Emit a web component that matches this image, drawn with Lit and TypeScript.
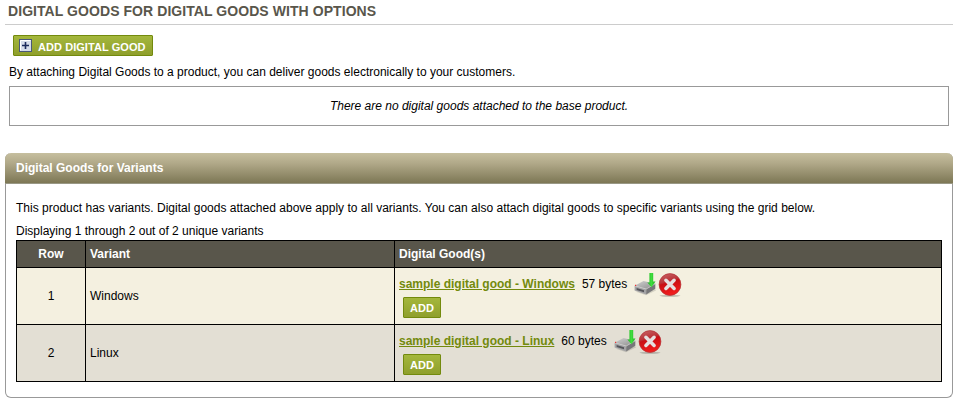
import { LitElement, html, css } from "lit";
import { customElement } from "lit/decorators.js";

interface VariantRow {
  row: number;
  variant: string;
  good: string;
  size: string;
}

const ROWS: VariantRow[] = [
  { row: 1, variant: "Windows", good: "sample digital good - Windows", size: "57 bytes" },
  { row: 2, variant: "Linux", good: "sample digital good - Linux", size: "60 bytes" },
];

@customElement("download-icon")
class DownloadIcon extends LitElement {
  static styles = css`
    :host { display: block; width: 24px; height: 24px; }
    svg { display: block; }
  `;
  render() {
    return html`<svg width="24" height="24" viewBox="0 0 24 24">
      <defs>
        <linearGradient id="top" x1="0" y1="0" x2="1" y2="1">
          <stop offset="0" stop-color="#d2d2d2" /><stop offset="1" stop-color="#8b8b8b" />
        </linearGradient>
        <linearGradient id="arrow" x1="0" y1="0" x2="1" y2="0">
          <stop offset="0" stop-color="#1fb51f" /><stop offset=".5" stop-color="#3fdc3f" /><stop offset="1" stop-color="#1fb51f" />
        </linearGradient>
      </defs>
      <path d="M2 19.5L13 23.3L23 18.5L22 17L12 20Z" fill="#000" opacity=".13" />
      <path d="M1.6 13.8L10.5 9L22.3 11.8L13.2 17Z" fill="url(#top)" />
      <path d="M1.6 13.8L13.2 17V22.4L1.6 18.5Z" fill="#a3a3a5" />
      <path d="M13.2 17L22.3 11.8V16.8L13.2 22.4Z" fill="#77777a" />
      <path d="M3.6 16L11 18.2V20.2L3.6 17.9Z" fill="#55555a" />
      <path d="M1.6 13.8L13.2 17L22.3 11.8" fill="none" stroke="#d6d6d6" stroke-width=".6" />
      <path d="M2 12.8h1.2v1.1H2z" fill="#e33" />
      <path d="M16.4 1H20.2V9.5H22.5L18.4 15.2L14.4 10.5H16.4Z" fill="url(#arrow)" />
    </svg>`;
  }
}

@customElement("delete-icon")
class DeleteIcon extends LitElement {
  static styles = css`
    :host { display: block; width: 24px; height: 24px; }
    svg { display: block; }
  `;
  render() {
    return html`<svg width="24" height="24" viewBox="0 0 24 24">
      <defs>
        <linearGradient id="ball" x1="0" y1="0" x2="0.3" y2="1">
          <stop offset="0" stop-color="#c9696b" /><stop offset=".42" stop-color="#bb3439" />
          <stop offset=".5" stop-color="#c90f15" /><stop offset="1" stop-color="#f01c1c" />
        </linearGradient>
      </defs>
      <ellipse cx="12" cy="22.8" rx="10.5" ry=".9" fill="#000" opacity=".24" />
      <circle cx="12" cy="11.5" r="10.9" fill="url(#ball)" stroke="#b33438" stroke-width=".7" />
      <path d="M7.9 7.3L16.1 15.5M16.1 7.3L7.9 15.5" stroke="#e6e0e0" stroke-width="3.5" stroke-linecap="round" />
    </svg>`;
  }
}

@customElement("app-root")
class AppRoot extends LitElement {
  static styles = css`
    :host {
      display: block;
      box-sizing: border-box;
      height: 401px;
      background: #fff;
      color: #000;
      font: 12px/14px "Liberation Sans", Arial, sans-serif;
      white-space: nowrap;
      overflow: hidden;
    }
    * { box-sizing: border-box; }
    h1 {
      margin: 0 3px 0 5px;
      height: 25px;
      padding: 3px 0 0 3px;
      border-bottom: 1px solid #ccc;
      color: #59564b;
      font-size: 14px;
      line-height: 17px;
      letter-spacing: 0.065px;
    }
    .button {
      display: inline-flex;
      align-items: center;
      height: 21px;
      padding: 1px 6px 0;
      border: 1px solid #738a0d;
      border-radius: 1px;
      background: linear-gradient(#a4b73c, #8f9f2c);
      color: #fff;
      font: bold 11px/14px "Liberation Sans", Arial, sans-serif;
    }
    .create {
      display: flex;
      width: 140px;
      margin: 10px 0 0 13px;
      padding: 2px 0 0 5px;
      gap: 6px;
      letter-spacing: 0.06px;
    }
    .create svg { margin-top: -3px; }
    .intro { margin: 9px 0 0 9px; }
    .empty {
      display: flex;
      align-items: center;
      justify-content: center;
      height: 40px;
      margin: 7px 7px 0 9px;
      border: 1px solid #999;
      font-style: italic;
    }
    .panel {
      height: 245px;
      margin: 27px 3px 0 5px;
      border: 1px solid #999;
      border-top: 0;
      border-radius: 6px;
    }
    .panel-head {
      height: 31px;
      margin: 0 -1px;
      padding: 8px 11px;
      border-bottom: 1px solid #999885;
      border-radius: 6px 6px 0 0;
      background: linear-gradient(#c6bf9f, #b0a888 35%, #7d7755);
      color: #fff;
      font-weight: bold;
    }
    .panel-body { padding: 17px 10px 0; }
    .note { letter-spacing: 0.009px; }
    .count { margin: 9px 0 2px; }
    .grid {
      display: grid;
      grid-template-columns: 68px 308px 546px;
      grid-template-rows: 26px 56px 56px;
      gap: 1px;
      padding: 1px;
      background: #000;
    }
    .cell {
      display: flex;
      align-items: center;
      padding: 0 4px;
      background: #f4f0e0;
    }
    .cell.alt { background: #e3dfd4; }
    .cell.head { background: #59564b; color: #fff; font-weight: bold; }
    .cell.mid { justify-content: center; }
    .cell.goods { flex-direction: column; align-items: flex-start; padding-top: 3px; }
    .file { display: flex; align-items: center; height: 25px; margin-bottom: 1px; }
    .file a { color: #738a0d; font-weight: bold; text-decoration: underline; }
    .size { margin: 0 6px 0 7px; }
    .file download-icon { margin-top: 1px; }
    .file delete-icon { margin: 3px 0 0 1px; }
    .add { margin-left: 4px; width: 38px; justify-content: center; }
  `;

  private renderRow(r: VariantRow) {
    const alt = r.row % 2 === 0 ? "alt" : "";
    return html`
      <div class="cell mid ${alt}">${r.row}</div>
      <div class="cell ${alt}">${r.variant}</div>
      <div class="cell goods ${alt}">
        <div class="file">
          <a>${r.good}</a><span class="size">${r.size}</span>
          <download-icon></download-icon><delete-icon></delete-icon>
        </div>
        <span class="button add">ADD</span>
      </div>`;
  }

  render() {
    return html`
      <h1>DIGITAL GOODS FOR DIGITAL GOODS WITH OPTIONS</h1>
      <div class="button create">
        <svg width="13" height="13" viewBox="0 0 13 13">
          <rect x=".5" y=".5" width="12" height="12" fill="#d5dcea" stroke="#4a5878" />
          <path d="M1.5 11.5V1.5H11.5" fill="none" stroke="#fff" />
          <path d="M3 6.5H10M6.5 3V10" stroke="#1b2a5c" stroke-width="1.6" />
        </svg>
        <span>ADD DIGITAL GOOD</span>
      </div>
      <div class="intro">By attaching Digital Goods to a product, you can deliver goods electronically to your customers.</div>
      <div class="empty">There are no digital goods attached to the base product.</div>
      <div class="panel">
        <div class="panel-head">Digital Goods for Variants</div>
        <div class="panel-body">
          <div class="note">This product has variants. Digital goods attached above apply to all variants. You can also attach digital goods to specific variants using the grid below.</div>
          <div class="count">Displaying 1 through 2 out of 2 unique variants</div>
          <div class="grid">
            <div class="cell head mid">Row</div>
            <div class="cell head">Variant</div>
            <div class="cell head">Digital Good(s)</div>
            ${ROWS.map((r) => this.renderRow(r))}
          </div>
        </div>
      </div>`;
  }
}
